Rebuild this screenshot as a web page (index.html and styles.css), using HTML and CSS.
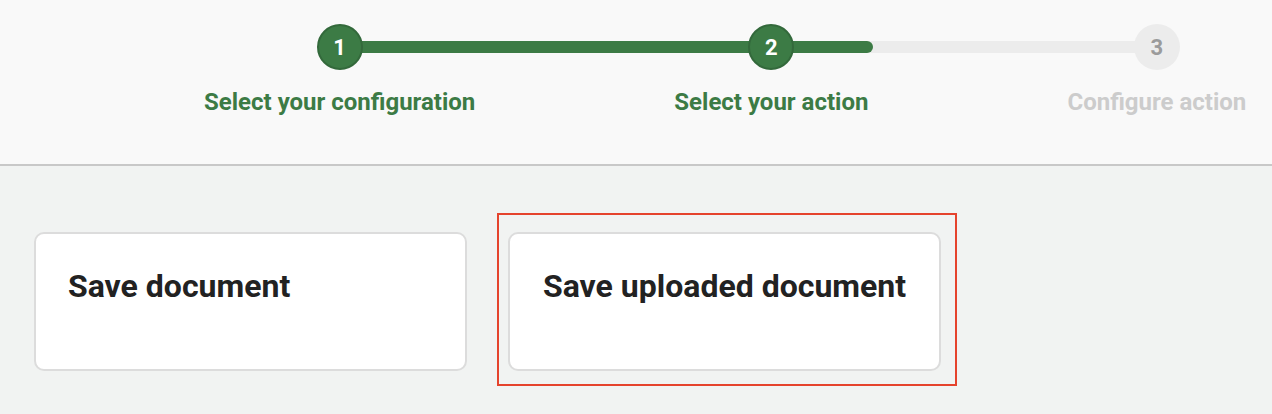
FILE: index.html
```html
<!DOCTYPE html>
<html>
<head>
<meta charset="utf-8">
<link rel="stylesheet" href="styles.css">
</head>
<body>
<header class="header">
  <div class="stepper">
    <div class="track"><div class="track-fill"></div></div>
    <div class="step done">
      <div class="circle">1</div>
      <div class="label">Select your configuration</div>
    </div>
    <div class="step done">
      <div class="circle">2</div>
      <div class="label">Select your action</div>
    </div>
    <div class="step todo">
      <div class="circle">3</div>
      <div class="label">Configure action</div>
    </div>
  </div>
</header>
<main class="main">
  <div class="card">
    <h2 class="card-title">Save document</h2>
  </div>
  <div class="card card-selected">
    <h2 class="card-title">Save uploaded document</h2>
    <div class="highlight"></div>
  </div>
</main>
</body>
</html>
```

FILE: styles.css
```css
* { box-sizing: border-box; }
html, body {
  margin: 0;
  padding: 0;
}
body {
  background: #f1f3f2;
  font-family: Roboto, "Liberation Sans", Arial, sans-serif;
  width: 1272px;
  height: 414px;
  overflow: hidden;
}
.header {
  height: 166px;
  background: #f9f9f9;
  border-bottom: 2px solid #c8c8c8;
  padding-top: 24px;
}
.stepper {
  position: relative;
  display: flex;
  gap: 199px;
  padding-left: 204px;
}
.track {
  position: absolute;
  left: 340px;
  top: 17px;
  width: 819px;
  height: 12px;
  background: #ececec;
}
.track-fill {
  width: 533px;
  height: 12px;
  background: #3c7b45;
  border-radius: 0 6px 6px 0;
}
.step {
  position: relative;
  display: flex;
  flex-direction: column;
  align-items: center;
}
.circle {
  width: 46px;
  height: 46px;
  border-radius: 50%;
  display: flex;
  align-items: center;
  justify-content: center;
  font-size: 22px;
  font-weight: 700;
}
.done .circle {
  background: #3c7b45;
  border: 2px solid #33693b;
  color: #ffffff;
}
.todo .circle {
  background: #ececec;
  color: #9b9b9b;
}
.label {
  margin-top: 18px;
  font-size: 24px;
  line-height: 28px;
  font-weight: 700;
  white-space: nowrap;
}
.done .label { color: #3c7b45; }
.todo .label { color: #cccccc; }
.main {
  display: flex;
  gap: 41px;
  padding: 66px 0 0 34px;
}
.card {
  position: relative;
  width: 433px;
  height: 139px;
  background: #ffffff;
  border: 2px solid #dcdcdc;
  border-radius: 10px;
  padding: 33px 32px;
}
.card-selected .card-title { padding-left: 1px; }
.card-title {
  margin: 0;
  font-size: 32px;
  font-weight: 700;
  color: #222222;
  white-space: nowrap;
}
.highlight {
  position: absolute;
  left: -13px;
  top: -21px;
  right: -18px;
  bottom: -17px;
  border: 2px solid #e5432d;
  pointer-events: none;
}
```
